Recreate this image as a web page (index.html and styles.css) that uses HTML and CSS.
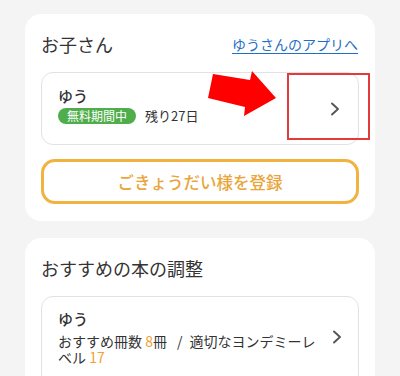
FILE: index.html
```html
<!DOCTYPE html>
<html lang="ja">
<head>
<meta charset="utf-8">
<link rel="stylesheet" href="styles.css">
</head>
<body>
<div class="page">
  <section class="card">
    <div class="card-head">
      <h2 class="title">お子さん</h2>
      <a class="link" href="#">ゆうさんのアプリへ</a>
    </div>
    <div class="row child-row">
      <div class="row-body">
        <div class="name">ゆう</div>
        <div class="status">
          <span class="badge">無料期間中</span>
          <span class="remain">残り27日</span>
        </div>
      </div>
      <svg class="chev" viewBox="0 0 10 14" width="10" height="14"><polyline points="2,1.5 8,7 2,12.5" fill="none" stroke="#555" stroke-width="1.9" stroke-linecap="round" stroke-linejoin="round"/></svg>
      <svg class="arrow" viewBox="0 0 120 60" width="120" height="60"><polygon points="11,9 48,15 50,6 74,33 42,51 43,42 6,33" fill="#ff0000"/></svg>
      <div class="highlight"></div>
    </div>
    <button class="add-btn" type="button">ごきょうだい様を登録</button>
  </section>

  <section class="card">
    <div class="card-head">
      <h2 class="title">おすすめの本の調整</h2>
    </div>
    <div class="row rec-row">
      <div class="row-body rec-body">
        <div class="name">ゆう</div>
        <div class="rec-text">おすすめ冊数 <span class="num">8</span>冊<span class="sep">/</span>適切なヨンデミーレベル <span class="num">17</span></div>
      </div>
      <svg class="chev" viewBox="0 0 10 14" width="10" height="14"><polyline points="2,1.5 8,7 2,12.5" fill="none" stroke="#555" stroke-width="1.9" stroke-linecap="round" stroke-linejoin="round"/></svg>
    </div>
  </section>
</div>
</body>
</html>
```
FILE: styles.css
```css
* { box-sizing: border-box; }
html, body {
  margin: 0;
  padding: 0;
  background: #f4f4f4;
  font-family: "Noto Sans CJK JP", "Noto Sans", sans-serif;
  color: #333;
  overflow: hidden;
}
.page {
  display: flex;
  flex-direction: column;
  gap: 17px;
  padding: 14px 25px 0 25px;
}
.card {
  background: #fff;
  border-radius: 16px;
  padding: 17px 16px 17px 16px;
  display: flex;
  flex-direction: column;
}
.card-head {
  display: flex;
  align-items: center;
  justify-content: space-between;
  height: 26px;
  margin-bottom: 15px;
}
.title {
  margin: 0;
  font-size: 18px;
  font-weight: 400;
  line-height: 26px;
  color: #333;
}
.link {
  font-size: 14px;
  color: #1f6fc6;
  text-decoration: underline;
  text-underline-offset: 3px;
  margin-right: 1px;
}
.row {
  position: relative;
  display: flex;
  align-items: center;
  border: 1px solid #e2e2e2;
  border-radius: 12px;
  padding: 13px 18px 20px 16px;
}
.row-body {
  flex: 1;
  min-width: 0;
}
.name {
  font-size: 15px;
  line-height: 20px;
  font-weight: 500;
}
.status {
  display: flex;
  align-items: center;
  gap: 9px;
  margin-top: 2px;
}
.badge {
  background: #4fae4b;
  color: #fff;
  font-size: 12px;
  line-height: 16px;
  height: 16px;
  padding: 0 9px;
  border-radius: 8px;
}
.remain {
  font-size: 13px;
  line-height: 16px;
}
.chev {
  flex: none;
  margin-left: 8px;
}
.child-row .chev {
  align-self: center;
  margin-top: 7px;
}
.arrow {
  position: absolute;
  left: 160px;
  top: -8px;
}
.highlight {
  position: absolute;
  left: 245px;
  top: 0px;
  width: 83px;
  height: 67px;
  border: 2px solid #e23b3b;
}
.add-btn {
  margin-top: 14px;
  height: 45px;
  border: 3px solid #f1b23f;
  border-radius: 14px;
  background: #fff;
  color: #e9a53a;
  font-family: inherit;
  font-size: 16.5px;
  font-weight: 500;
  padding: 0;
}
.rec-row {
  padding: 12px 16px 20px 16px;
}
.rec-body {
  padding-right: 6px;
}
.rec-text {
  font-size: 14px;
  line-height: 16px;
  margin-top: 4px;
}
.sep {
  margin: 0 7px 0 10px;
}
.num {
  color: #efa333;
}
```
